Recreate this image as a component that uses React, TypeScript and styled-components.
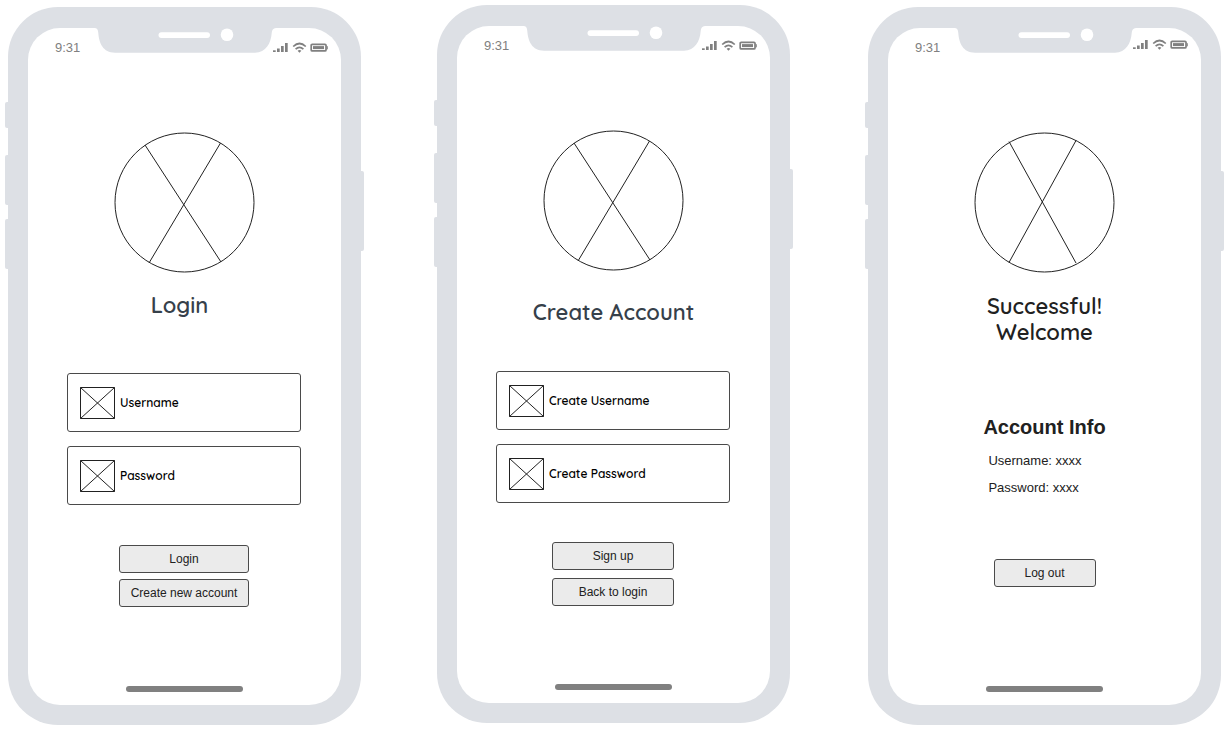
import React from "react";
import styled, { createGlobalStyle } from "styled-components";

const GlobalStyle = createGlobalStyle`
  *, *::before, *::after { box-sizing: border-box; }
  body {
    margin: 0;
    background: #ffffff;
    color: #212121;
    font-family: "Liberation Sans", Arial, sans-serif;
  }
`;

const rounded = `Quicksand, Lato, sans-serif`;
const frameColor = "#dde0e5";

const Board = styled.main`
  display: flex;
  align-items: flex-start;
  padding: 5px 8px 6px 8px;
  gap: 76px;
`;

const Frame = styled.section<{ $top: number; $last?: boolean }>`
  position: relative;
  flex: 0 0 353px;
  margin-top: ${(p) => p.$top}px;
  margin-left: ${(p) => (p.$last ? "auto" : "0")};
  padding: 21px 20px 20px;
  border-radius: 50px;
  background: ${frameColor};
`;

const SideKey = styled.span<{ $side: "left" | "right"; $y: number; $length: number }>`
  position: absolute;
  top: ${(p) => p.$y}px;
  ${(p) => p.$side}: -3px;
  width: 6px;
  height: ${(p) => p.$length}px;
  border-radius: 2px;
  background: ${frameColor};
`;

const Screen = styled.div`
  display: flex;
  flex-direction: column;
  align-items: center;
  min-height: 677px;
  padding-bottom: 13px;
  border-radius: 32px;
  background: #ffffff;
`;

const StatusBar = styled.header`
  display: grid;
  grid-template-columns: 1fr 183px 1fr;
  width: 100%;
  height: 104px;
`;

const Clock = styled.time`
  padding: 11px 0 0 27px;
  color: #808080;
  font-size: 13px;
  line-height: 18px;
`;

const Indicators = styled.div<{ $top: number }>`
  margin-left: -3px;
  padding-top: ${(p) => p.$top}px;
  line-height: 0;
`;

const Title = styled.h1<{ $gap: number; $color: string; $trailing?: number }>`
  margin: ${(p) => p.$gap}px 0 0;
  padding-right: ${(p) => p.$trailing ?? 0}px;
  color: ${(p) => p.$color};
  font-family: ${rounded};
  font-size: 22px;
  font-weight: 600;
  line-height: 26px;
  text-align: center;
`;

const Form = styled.form<{ $gap: number }>`
  display: flex;
  flex-direction: column;
  align-items: center;
  width: 100%;
  padding: 0 40px 0 39px;
  margin-top: ${(p) => p.$gap}px;
`;

const Field = styled.label`
  display: flex;
  align-items: center;
  gap: 5px;
  width: 100%;
  height: 59px;
  padding-left: 12px;
  border: 1px solid #4a4a4a;
  border-radius: 3px;

  & + & { margin-top: 14px; }
`;

const FieldInput = styled.input`
  flex: 1;
  min-width: 0;
  height: 24px;
  padding: 0;
  border: 0;
  outline: 0;
  background: transparent;
  font: 600 12px/24px ${rounded};
  color: #000000;

  &::placeholder { color: #000000; opacity: 1; }
`;

const Actions = styled.div<{ $top: number; $gap: number; $width: number }>`
  display: flex;
  flex-direction: column;
  gap: ${(p) => p.$gap}px;
  width: ${(p) => p.$width}px;
  margin-top: ${(p) => p.$top}px;
`;

const Button = styled.button`
  height: 28px;
  padding: 0;
  border: 1px solid #4a4a4a;
  border-radius: 3px;
  background: #ebebeb;
  color: #212121;
  font: 400 12px/16px "Liberation Sans", Arial, sans-serif;
  white-space: nowrap;
`;

const Account = styled.section`
  display: flex;
  flex-direction: column;
  margin-top: 70px;
`;

const AccountHeading = styled.h2`
  margin: 0 0 8px;
  font-size: 20px;
  font-weight: 700;
  line-height: 24px;
`;

const AccountLine = styled.p`
  margin: 0;
  padding-left: 5px;
  font-size: 13px;
  line-height: 27px;
`;

const HomeBar = styled.div`
  width: 117px;
  height: 6px;
  margin-top: auto;
  border-radius: 3px;
  background: #808080;
`;

const Notch = () => (
  <svg width="183" height="26" viewBox="0 0 183 26" aria-hidden="true">
    <path
      d="M0 0H2C4.500 .3 5 2 5.300 5C6 15 10 24.700 22 24.700H162C173 24.700 178 15 178.700 5C179 2 180 .3 183 0Z"
      fill={frameColor}
    />
    <rect x="65.500" y="4.200" width="51.500" height="5.800" rx="2.900" fill="#fff" />
    <circle cx="134" cy="6.700" r="6.300" fill="#fff" />
  </svg>
);

const StatusIcons = () => (
  <svg width="55" height="11" viewBox="0 0 55 11" aria-hidden="true">
    <g fill="#808080">
      <rect x="0" y="8.300" width="2.700" height="1.700" />
      <rect x="4" y="6.500" width="2.700" height="3.500" />
      <rect x="8" y="4" width="2.700" height="6" />
      <rect x="12" y="1" width="2.700" height="9" />
      <path d="M26.500 10.700L24.600 8.800Q26.500 7.400 28.400 8.800Z" />
    </g>
    <g fill="none" stroke="#808080" strokeWidth="1.700">
      <path d="M20.200 4.500Q26.500 -1.500 32.800 4.500" />
      <path d="M22.600 7.100Q26.500 3.500 30.400 7.100" />
      <rect x="38.200" y="2.300" width="14.800" height="6.600" rx="1" />
    </g>
    <rect x="40" y="4.100" width="11" height="3" fill="#808080" />
    <path d="M53.500 3.500L54.800 4.500V7L53.500 8Z" fill="#808080" />
  </svg>
);

type Cross = [string, string];
const tallCross: Cross = ["M31 13L107 130", "M106.500 11L35 131"];
const evenCross: Cross = ["M35 9.500L102 131", "M102 8.500L35 130.500"];

const Avatar = ({ cross }: { cross: Cross }) => (
  <svg width="141" height="141" viewBox="0 0 141 141" role="img" aria-label="Profile picture">
    <g fill="none" stroke="#212121" strokeWidth="1">
      <circle cx="70.500" cy="70.500" r="69.500" />
      <path d={cross[0]} />
      <path d={cross[1]} />
    </g>
  </svg>
);

const FieldIcon = () => (
  <svg width="35" height="32" viewBox="0 0 35 32" aria-hidden="true">
    <path
      d="M.5 .5H34.500V31.500H.5ZM.5 .5L34.500 31.500M34.500 .5L.5 31.500"
      fill="none"
      stroke="#212121"
    />
  </svg>
);

interface PhoneProps {
  label: string;
  top: number;
  last?: boolean;
  iconsTop?: number;
  children: React.ReactNode;
}

const Phone = ({ label, top, last, iconsTop = 14, children }: PhoneProps) => (
  <Frame $top={top} $last={last} aria-label={label}>
    <SideKey $side="left" $y={95} $length={26} />
    <SideKey $side="left" $y={148} $length={50} />
    <SideKey $side="left" $y={212} $length={50} />
    <SideKey $side="right" $y={164} $length={80} />
    <Screen>
      <StatusBar>
        <Clock>9:31</Clock>
        <Notch />
        <Indicators $top={iconsTop}>
          <StatusIcons />
        </Indicators>
      </StatusBar>
      {children}
      <HomeBar />
    </Screen>
  </Frame>
);

const TextField = ({ name, type = "text" }: { name: string; type?: string }) => (
  <Field>
    <FieldIcon />
    <FieldInput type={type} placeholder={name} aria-label={name} />
  </Field>
);

export default function App() {
  return (
    <>
      <GlobalStyle />
      <Board>
        <Phone label="Login" top={2}>
          <Avatar cross={tallCross} />
          <Title $gap={19} $color="#36404a" $trailing={10}>Login</Title>
          <Form $gap={55}>
            <TextField name="Username" />
            <TextField name="Password" type="password" />
            <Actions $top={40} $gap={6} $width={130}>
              <Button type="button">Login</Button>
              <Button type="button">Create new account</Button>
            </Actions>
          </Form>
        </Phone>

        <Phone label="Create account" top={0}>
          <Avatar cross={tallCross} />
          <Title $gap={28} $color="#36404a">Create Account</Title>
          <Form $gap={46}>
            <TextField name="Create Username" />
            <TextField name="Create Password" type="password" />
            <Actions $top={39} $gap={8} $width={122}>
              <Button type="button">Sign up</Button>
              <Button type="button">Back to login</Button>
            </Actions>
          </Form>
        </Phone>

        <Phone label="Welcome" top={2} last iconsTop={11}>
          <Avatar cross={evenCross} />
          <Title $gap={20} $color="#212121">
            Successful!
            <br />
            Welcome
          </Title>
          <Account>
            <AccountHeading>Account Info</AccountHeading>
            <AccountLine>Username: xxxx</AccountLine>
            <AccountLine>Password: xxxx</AccountLine>
          </Account>
          <Actions $top={58} $gap={8} $width={102}>
            <Button type="button">Log out</Button>
          </Actions>
        </Phone>
      </Board>
    </>
  );
}
